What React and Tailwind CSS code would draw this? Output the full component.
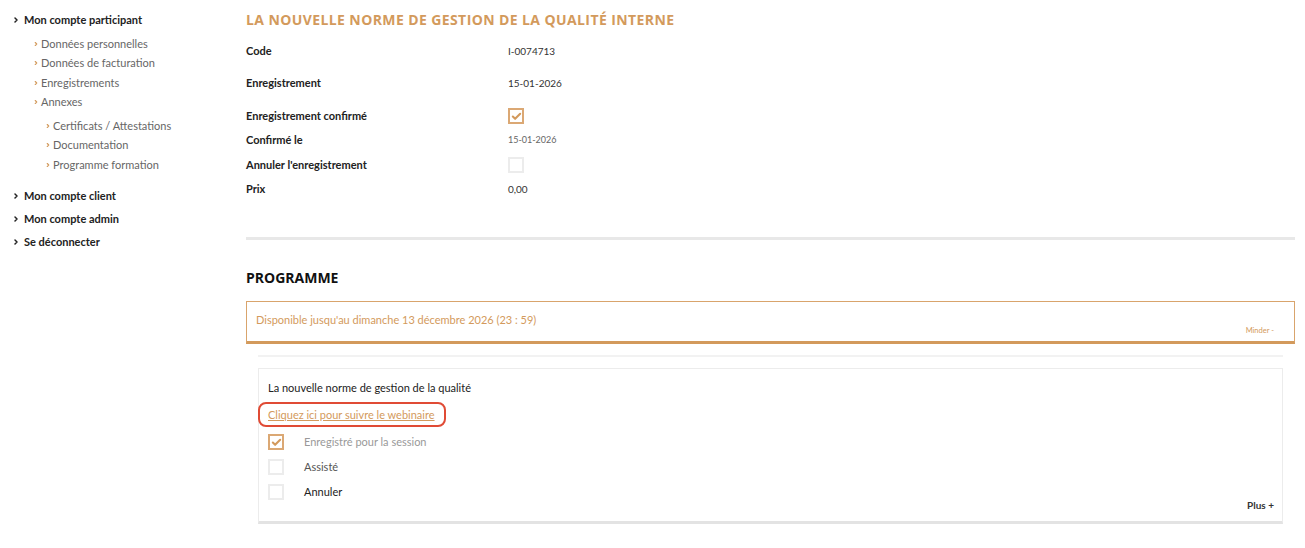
import { Check, ChevronRight } from "lucide-react";

const ORANGE = "text-[#d39a5c]";

function Chev({ className = "" }) {
  return <ChevronRight className={className} strokeWidth={4.5} />;
}

function NavTop({ label, className = "" }) {
  return (
    <div className={`flex items-center h-[23px] gap-[4px] text-[11px] font-bold text-[#222] ${className}`}>
      <Chev className="w-[8px] h-[8px] text-[#222]" />
      <span>{label}</span>
    </div>
  );
}

function NavSub({ label, className = "" }) {
  return (
    <div className={`flex items-center h-[19.5px] gap-[2px] text-[11px] text-[#666] ${className}`}>
      <Chev className="w-[6px] h-[6px] text-[#d39a5c]" />
      <span>{label}</span>
    </div>
  );
}

function Box({ checked }) {
  return (
    <div
      className={`w-[16px] h-[16px] border-2 flex items-center justify-center ${
        checked ? "border-[#dba874]" : "border-[#ececec]"
      }`}
    >
      {checked && <Check className="w-[11px] h-[11px] text-[#d39a5c]" strokeWidth={4.5} />}
    </div>
  );
}

function Row({ label, children, className = "" }) {
  return (
    <div className={`flex items-center h-[24px] text-[11px] ${className}`}>
      <div className="w-[262px] font-bold text-[#222]">{label}</div>
      <div className="flex items-center">{children}</div>
    </div>
  );
}

export default function App() {
  return (
    <div
      className="flex w-[1305px] h-[548px] bg-white leading-[14px]"
      style={{ fontFamily: "Lato, 'Open Sans', sans-serif" }}
    >
      {/* sidebar */}
      <aside className="w-[246px] shrink-0 pl-[12px] pt-[8.5px]">
        <NavTop label="Mon compte participant" />
        <div className="pl-[21px] mt-[2.5px] flex flex-col">
          <NavSub label="Données personnelles" />
          <NavSub label="Données de facturation" />
          <NavSub label="Enregistrements" />
          <NavSub label="Annexes" />
          <div className="pl-[12px] mt-[4px] flex flex-col">
            <NavSub label="Certificats / Attestations" />
            <NavSub label="Documentation" />
            <NavSub label="Programme formation" />
          </div>
        </div>
        <div className="mt-[10px] flex flex-col">
          <NavTop label="Mon compte client" />
          <NavTop label="Mon compte admin" />
          <NavTop label="Se déconnecter" />
        </div>
      </aside>

      {/* main */}
      <main className="flex-1 pr-[10px] pt-[10px]">
        <h1
          className={`h-[20px] flex items-center text-[14px] font-bold uppercase tracking-[0.4px] ${ORANGE}`}
          style={{ fontFamily: "'Open Sans', sans-serif" }}
        >
          La nouvelle norme de gestion de la qualité interne
        </h1>

        <div className="mt-[9px]">
          <Row label="Code">
            <span className="text-[10px] text-[#333]">I-0074713</span>
          </Row>
          <Row label="Enregistrement" className="mt-[8px]">
            <span className="text-[10px] text-[#333]">15-01-2026</span>
          </Row>
          <Row label="Enregistrement confirmé" className="mt-[9px]">
            <Box checked />
          </Row>
          <Row label="Confirmé le">
            <span className="text-[9px] text-[#666]">15-01-2026</span>
          </Row>
          <Row label="Annuler l'enregistrement" className="mt-[1px]">
            <Box />
          </Row>
          <Row label="Prix">
            <span className="text-[10px] text-[#333]">0,00</span>
          </Row>
        </div>

        <div className="mt-[36px] h-[3px] bg-[#e8e8e8]" />

        <h2
          className="mt-[28px] h-[20px] flex items-center text-[14px] font-bold text-[#111]"
          style={{ fontFamily: "'Open Sans', sans-serif" }}
        >
          PROGRAMME
        </h2>

        <div className="mt-[13px] border border-[#d9a46c] border-b-[3px] border-b-[#d39a5c] h-[43px] pl-[9px] pr-[20px] flex items-start justify-between">
          <span className={`mt-[11px] text-[11px] ${ORANGE}`}>
            Disponible jusqu'au dimanche 13 décembre 2026 (23 : 59)
          </span>
          <span className="mt-[22px] text-[7.5px] text-[#d39a5c]">Minder -</span>
        </div>

        <div className="mx-[12px]">
          <div className="mt-[11px] h-[2px] bg-[#f2f2f2]" />

          <div className="mt-[11px] border border-[#ececec] border-b-[3px] border-b-[#e3e3e3] pl-[9px] pr-[8px] pt-[11px] pb-[10px]">
            <div className="h-[16px] flex items-center text-[11px] text-[#222]">
              La nouvelle norme de gestion de la qualité
            </div>
            <div className="mt-[6px] -ml-[10px] h-[25px] inline-flex items-center border-2 border-[#e04b35] rounded-[8px] pl-[8px] pr-[9px]">
              <a href="#" className={`text-[11px] underline ${ORANGE}`}>
                Cliquez ici pour suivre le webinaire
              </a>
            </div>
            <div className="mt-[2.5px] flex flex-col">
              <div className="h-[25px] flex items-center gap-[20px]">
                <Box checked />
                <span className="text-[11px] text-[#999]">Enregistré pour la session</span>
              </div>
              <div className="h-[25px] flex items-center gap-[20px]">
                <Box />
                <span className="text-[11px] text-[#555]">Assisté</span>
              </div>
              <div className="h-[25px] flex items-center gap-[20px]">
                <Box />
                <span className="text-[11px] text-[#222]">Annuler</span>
              </div>
            </div>
            <div className="flex justify-end -mt-[6px] h-[12px] items-center">
              <span className="text-[10px] font-bold text-[#333]">Plus +</span>
            </div>
          </div>
        </div>
      </main>
    </div>
  );
}
